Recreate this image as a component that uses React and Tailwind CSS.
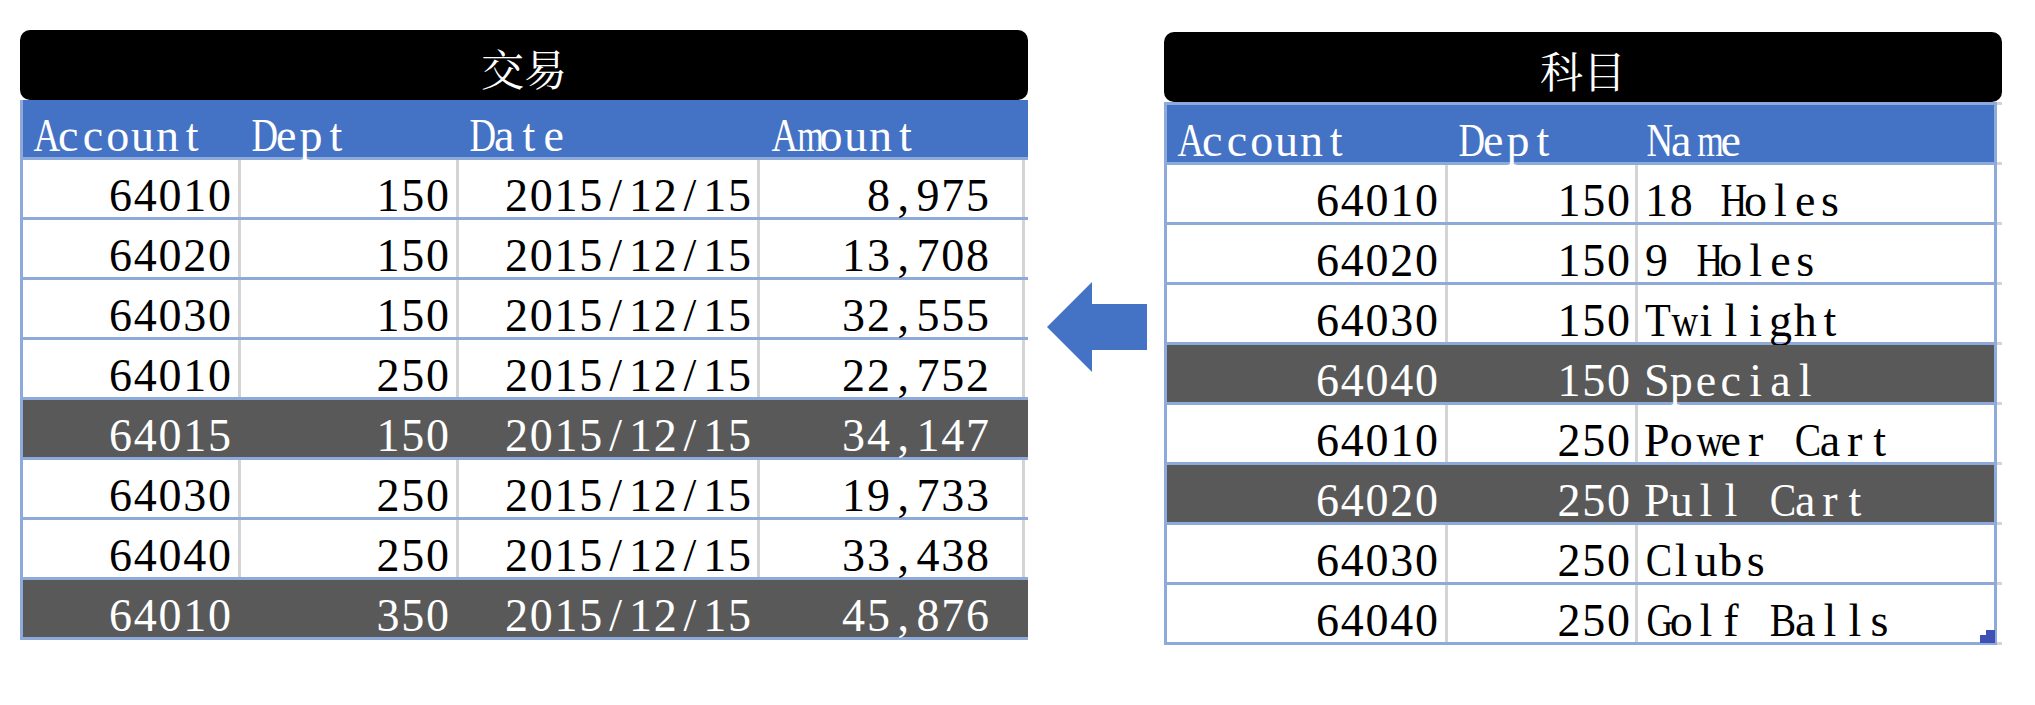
import React from "react";

const NARROW = {
  A: "scale-x-[0.8]",
  D: "scale-x-[0.8]",
  N: "scale-x-[0.8]",
  H: "scale-x-[0.8]",
  G: "scale-x-[0.8]",
  C: "scale-x-[0.86]",
  B: "scale-x-[0.86]",
  T: "scale-x-[0.92]",
  m: "scale-x-[0.74]",
  w: "scale-x-[0.8]",
};

function Mono({ text }) {
  return (
    <span className="whitespace-nowrap">
      {[...text].map((c, i) => (
        <span key={i} className={`inline-block w-[24.8px] text-center ${NARROW[c] || ""}`}>
          {c === " " ? "\u00a0" : c}
        </span>
      ))}
    </span>
  );
}

function Cell({ w, text, right, dark, divider, pad }) {
  const border = divider
    ? dark
      ? "border-r-[3px] border-[#595959]"
      : "border-r-[3px] border-[#d4d4d4]"
    : "";
  return (
    <div
      className={`${w} ${border} ${right ? "justify-end" : "justify-start"} ${pad} flex h-full items-start pt-[13px] text-[46px] leading-[45px]`}
    >
      <Mono text={text} />
    </div>
  );
}

const leftRows = [
  ["64010", "150", "2015/12/15", "8,975", false],
  ["64020", "150", "2015/12/15", "13,708", false],
  ["64030", "150", "2015/12/15", "32,555", false],
  ["64010", "250", "2015/12/15", "22,752", false],
  ["64015", "150", "2015/12/15", "34,147", true],
  ["64030", "250", "2015/12/15", "19,733", false],
  ["64040", "250", "2015/12/15", "33,438", false],
  ["64010", "350", "2015/12/15", "45,876", true],
];

const rightRows = [
  ["64010", "150", "18 Holes", false],
  ["64020", "150", "9 Holes", false],
  ["64030", "150", "Twilight", false],
  ["64040", "150", "Special", true],
  ["64010", "250", "Power Cart", false],
  ["64020", "250", "Pull Cart", true],
  ["64030", "250", "Clubs", false],
  ["64040", "250", "Golf Balls", false],
];

function Title({ children }) {
  return (
    <div className="flex h-[70px] items-center justify-center rounded-[10px] bg-black pt-[4px] text-[43px] leading-none text-white [font-family:'Noto_Serif_CJK_SC','Noto_Sans_CJK_SC',serif]">
      {children}
    </div>
  );
}

function LeftTable() {
  return (
    <div className="w-[1008px]">
      <Title>交易</Title>
      <div className="flex h-[60px] border-b-[3px] border-l-[3px] border-[#8eaadb] bg-[#4472c4] text-white">
        <Cell w="w-[218px]" text="Account" pad="pl-[8px]" />
        <Cell w="w-[218px]" text="Dept" pad="pl-[8px]" />
        <Cell w="w-[301px]" text="Date" pad="pl-[8px]" />
        <Cell w="w-[268px]" text="Amount" pad="pl-[9px]" />
      </div>
      {leftRows.map((r, i) => (
        <div
          key={i}
          className={`flex h-[60px] border-b-[3px] border-l-[3px] border-[#8eaadb] ${
            r[4] ? "bg-[#595959] text-white" : "bg-white text-black"
          }`}
        >
          <Cell w="w-[218px]" text={r[0]} right divider dark={r[4]} pad="pr-[6px]" />
          <Cell w="w-[218px]" text={r[1]} right divider dark={r[4]} pad="pr-[6px]" />
          <Cell w="w-[301px]" text={r[2]} right divider dark={r[4]} pad="pr-[5px]" />
          <Cell w="w-[265px]" text={r[3]} right divider dark={r[4]} pad="pr-[32px]" />
          <div className={`h-full w-[3px] ${r[4] ? "bg-[#595959]" : "bg-white"}`} />
        </div>
      ))}
    </div>
  );
}

function RightTable() {
  return (
    <div className="relative w-[838px]">
      <Title>科目</Title>
      <div className="flex h-[63px]">
        <div className="flex w-[833px] border-[3px] border-[#8eaadb] bg-[#4472c4] text-white">
          <Cell w="w-[281px]" text="Account" pad="pl-[8px]" />
          <Cell w="w-[190px]" text="Dept" pad="pl-[8px]" />
          <Cell w="w-[356px]" text="Name" pad="pl-[6px]" />
        </div>
        <div className="flex h-full w-[5px] flex-col justify-between">
          <div className="h-[3px] bg-[#d4d4d4]" />
          <div className="h-[3px] bg-[#d4d4d4]" />
        </div>
      </div>
      {rightRows.map((r, i) => (
        <div key={i} className="flex h-[60px]">
          <div
            className={`flex w-[833px] border-x-[3px] border-b-[3px] border-[#8eaadb] ${
              r[3] ? "bg-[#595959] text-white" : "bg-white text-black"
            }`}
          >
            <Cell w="w-[281px]" text={r[0]} right divider dark={r[3]} pad="pr-[6px]" />
            <Cell w="w-[190px]" text={r[1]} right divider dark={r[3]} pad="pr-[4px]" />
            <Cell w="w-[356px]" text={r[2]} pad="pl-[6px]" />
          </div>
          <div className="flex h-full w-[5px] flex-col justify-end">
            <div className="h-[3px] bg-[#d4d4d4]" />
          </div>
        </div>
      ))}
      <svg
        className="absolute bottom-[2px] right-[7px]"
        width="15"
        height="13"
        viewBox="0 0 15 13"
      >
        <polygon points="6,0 15,0 15,13 0,13 0,5 6,5" fill="#3f51b5" />
      </svg>
    </div>
  );
}

function Arrow() {
  return (
    <svg width="101" height="90" viewBox="0 0 101 90">
      <polygon points="1,45 46,0 46,22 101,22 101,68 46,68 46,90" fill="#4472c4" />
    </svg>
  );
}

export default function App() {
  return (
    <div className="flex h-[705px] w-[2035px] items-start bg-white pl-[20px] pt-[30px] [font-family:'Liberation_Serif','Noto_Serif_CJK_SC','Noto_Sans_CJK_SC',serif]">
      <LeftTable />
      <div className="ml-[18px] mt-[252px]">
        <Arrow />
      </div>
      <div className="ml-[17px] mt-[2px]">
        <RightTable />
      </div>
    </div>
  );
}
